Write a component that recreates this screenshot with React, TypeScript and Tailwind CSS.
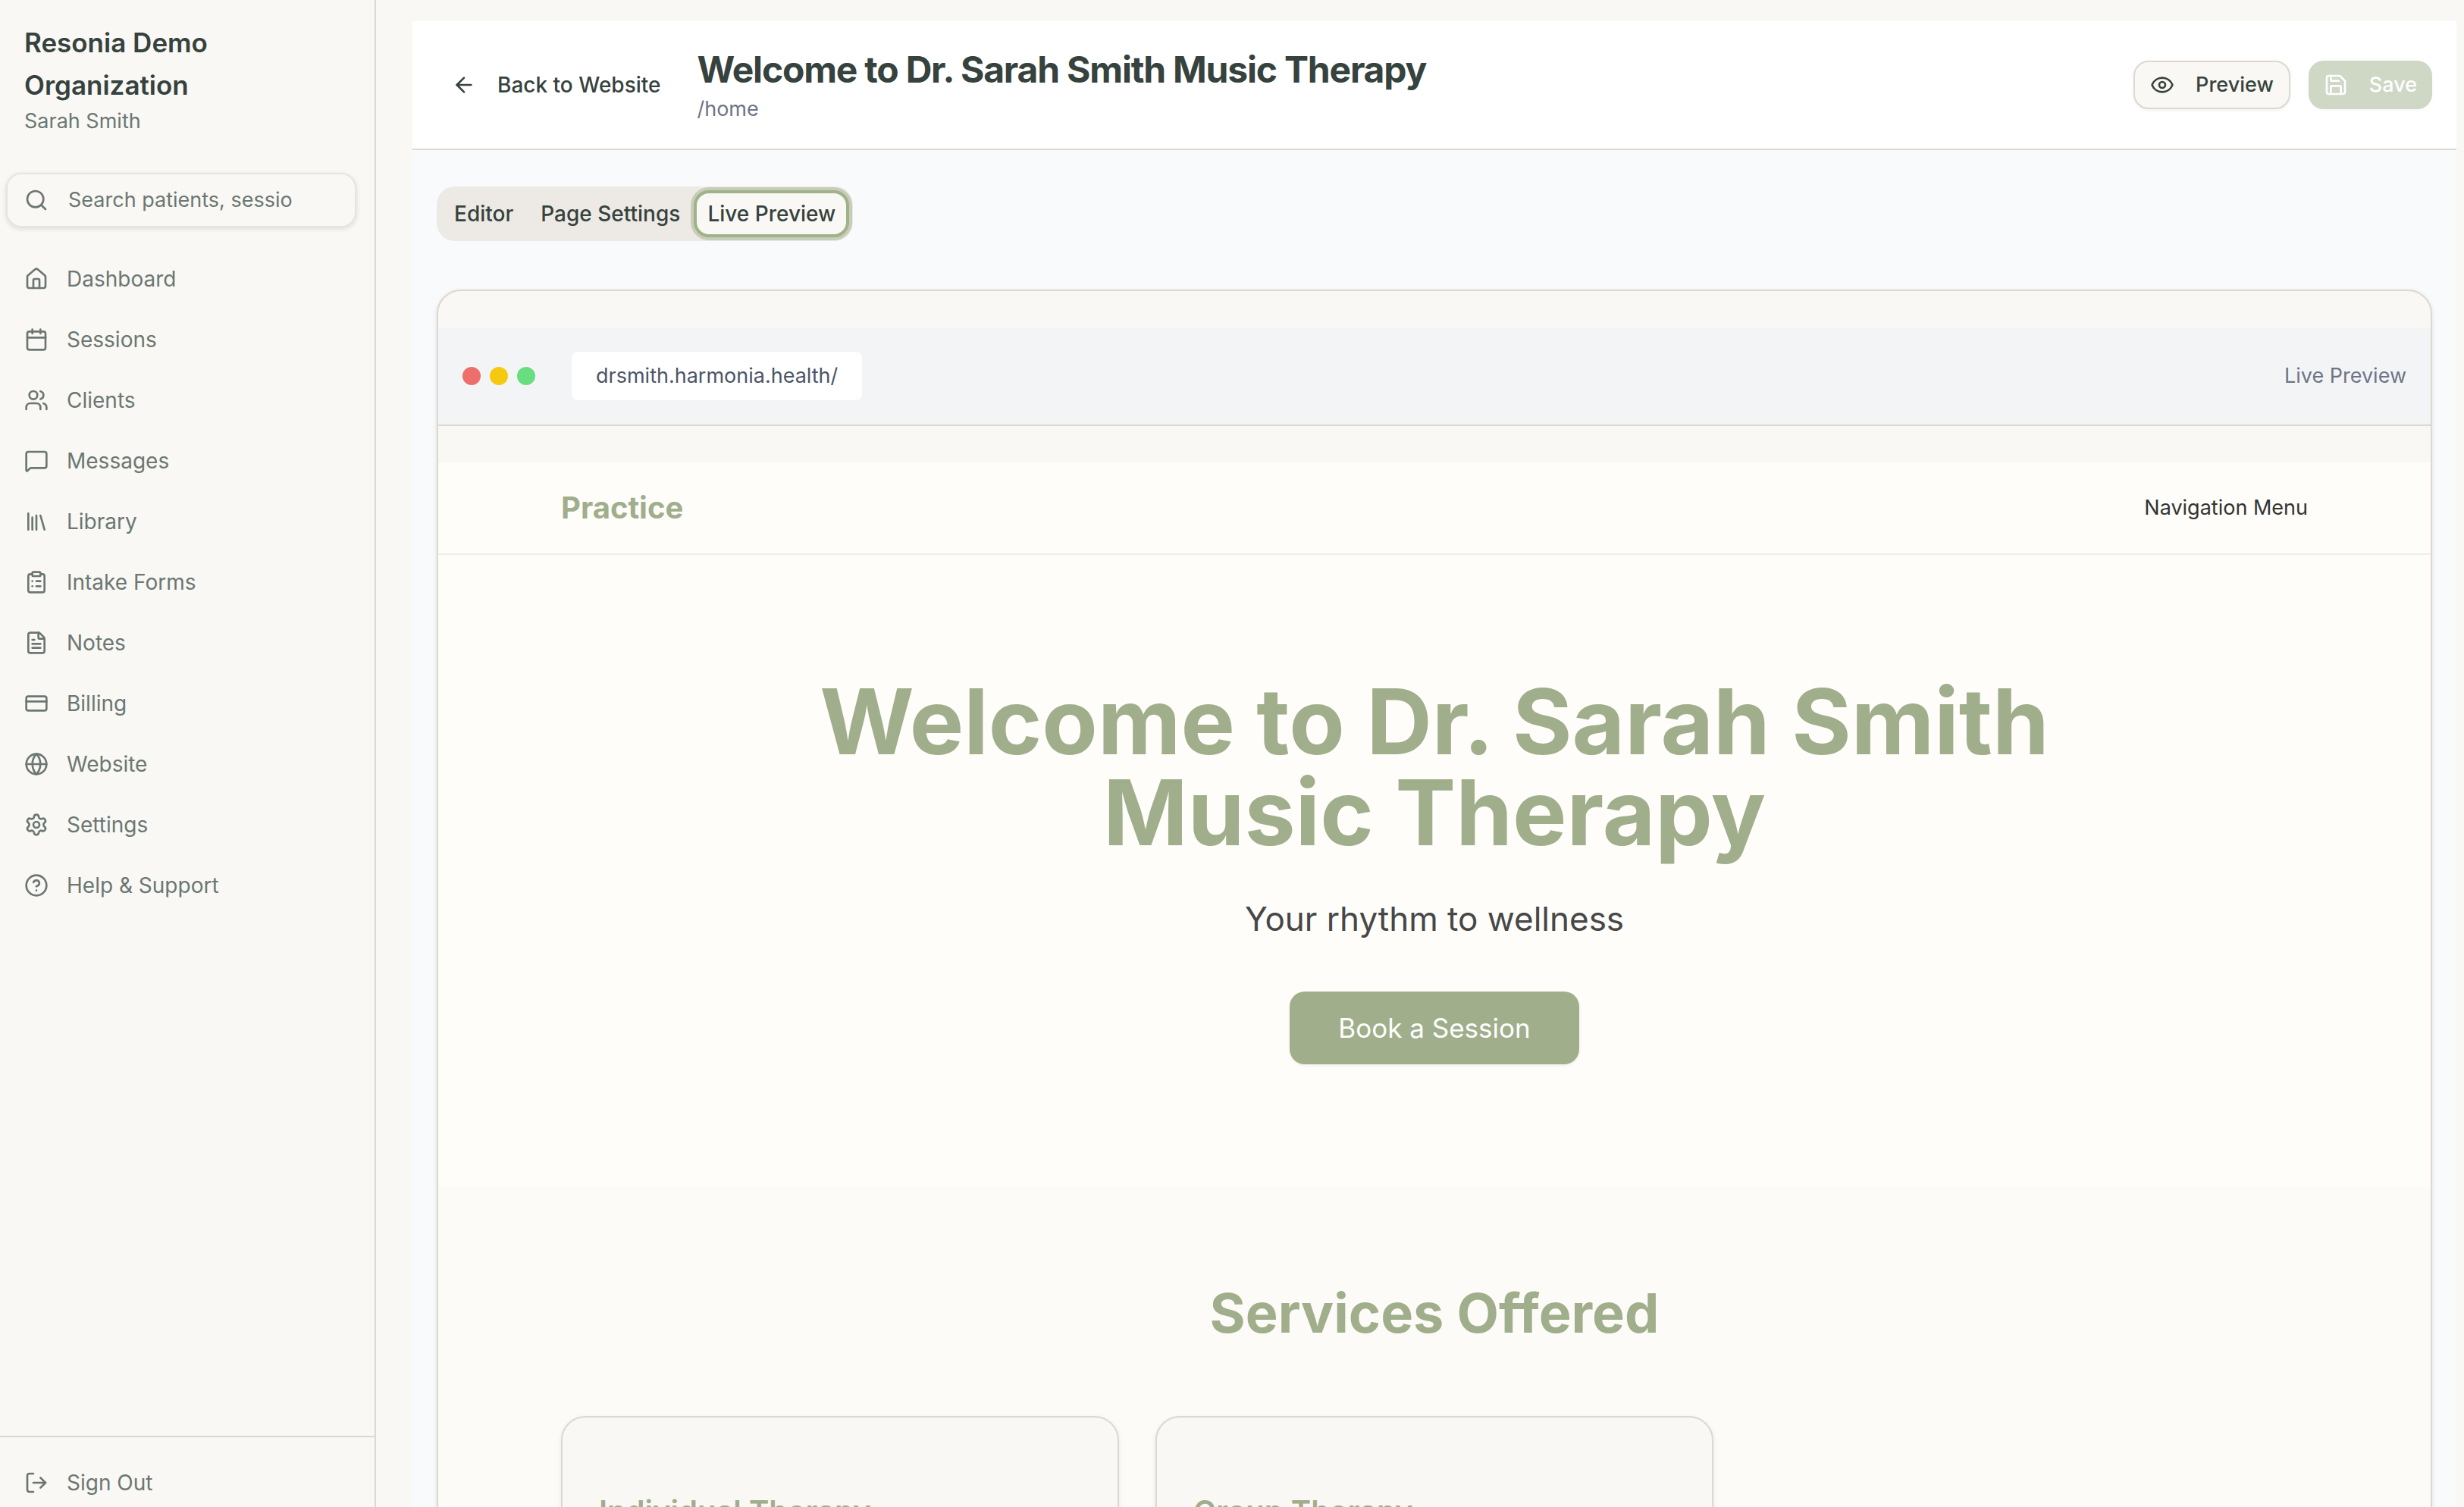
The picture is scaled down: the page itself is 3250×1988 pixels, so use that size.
import { useState } from 'react';
import type { ReactNode } from 'react';
import type { LucideIcon } from 'lucide-react';
import {
  ArrowLeft,
  Calendar,
  CircleHelp,
  ClipboardList,
  CreditCard,
  Eye,
  FileText,
  Globe,
  House,
  Library,
  LogOut,
  MessageSquare,
  Save,
  Search,
  Settings,
  Users,
} from 'lucide-react';

const navItems: { label: string; icon: LucideIcon }[] = [
  { label: 'Dashboard', icon: House },
  { label: 'Sessions', icon: Calendar },
  { label: 'Clients', icon: Users },
  { label: 'Messages', icon: MessageSquare },
  { label: 'Library', icon: Library },
  { label: 'Intake Forms', icon: ClipboardList },
  { label: 'Notes', icon: FileText },
  { label: 'Billing', icon: CreditCard },
  { label: 'Website', icon: Globe },
  { label: 'Settings', icon: Settings },
  { label: 'Help & Support', icon: CircleHelp },
];

const tabs = ['Editor', 'Page Settings', 'Live Preview'];

const services = ['Individual Therapy', 'Group Therapy'];

function Sidebar() {
  return (
    <aside className="flex w-[496px] shrink-0 flex-col border-r-2 border-[#ddd8d0] text-[#6b7773]">
      <div className="px-8 pt-7">
        <h2 className="text-[35px] leading-14 font-semibold text-[#36423d]">Resonia Demo Organization</h2>
        <p className="text-[27px] leading-10">Sarah Smith</p>
      </div>

      <div className="mt-12 pr-6 pl-2">
        <label className="flex h-18 items-center gap-[26px] rounded-[20px] border-2 border-[#e6e4de] pr-[82px] pl-[22px] shadow-[0_2px_6px_rgba(0,0,0,0.12)]">
          <Search className="size-8 shrink-0" />
          <input
            type="text"
            aria-label="Search"
            placeholder="Search patients, sessions..."
            className="w-full min-w-0 bg-transparent text-[27px] leading-10 outline-none placeholder:text-[#6b7773]"
          />
        </label>
      </div>

      <nav className="mt-9 flex flex-1 flex-col gap-4">
        {navItems.map(({ label, icon: Icon }) => (
          <a key={label} href="#" className="flex h-16 items-center gap-6 px-8 text-[28px] leading-10">
            <Icon className="size-8 shrink-0" />
            {label}
          </a>
        ))}
      </nav>

      <div className="border-t-2 border-[#ddd8d0] pt-7">
        <button type="button" className="flex h-16 items-center gap-6 px-8 text-[28px] leading-10">
          <LogOut className="size-8 shrink-0" />
          Sign Out
        </button>
      </div>
    </aside>
  );
}

function PageHeader() {
  return (
    <header className="flex items-center justify-between border-b-2 border-[#ddd8d0] bg-white p-8">
      <div className="flex items-center gap-7">
        <button type="button" className="flex h-16 items-center gap-7 px-5 text-[28px] font-medium">
          <ArrowLeft className="size-8" />
          Back to Website
        </button>
        <div>
          <h1 className="text-[48px] leading-16 font-bold tracking-tight">Welcome to Dr. Sarah Smith Music Therapy</h1>
          <p className="text-[27px] leading-10 text-[#6e7486]">/home</p>
        </div>
      </div>
      <div className="flex items-center gap-6 text-[27px] font-medium">
        <button
          type="button"
          className="flex h-16 items-center gap-7 rounded-[20px] border-2 border-[#ddd8d0] bg-[#f9f8f4] px-5 shadow-[0_2px_4px_rgba(0,0,0,0.05)]"
        >
          <Eye className="size-8" />
          Preview
        </button>
        <button
          type="button"
          disabled
          className="flex h-16 items-center gap-7 rounded-[20px] bg-[#cfd7c5] px-5 text-white shadow-[0_2px_4px_rgba(0,0,0,0.03)]"
        >
          <Save className="size-8" />
          Save
        </button>
      </div>
    </header>
  );
}

function BrowserBar() {
  return (
    <div className="flex items-center justify-between border-b-2 border-[#ddd8d0] bg-[#f3f4f6] p-8 text-[27px] leading-10">
      <div className="flex items-center gap-12">
        <div className="flex gap-3">
          <span className="size-6 rounded-full bg-[#ee6e6c]" />
          <span className="size-6 rounded-full bg-[#f6c911]" />
          <span className="size-6 rounded-full bg-[#68de80]" />
        </div>
        <div className="rounded-lg bg-white px-8 py-3 text-[#4b5565]">drsmith.harmonia.health/</div>
      </div>
      <span className="text-[#6e7486]">Live Preview</span>
    </div>
  );
}

function Container({ children, className = '' }: { children: ReactNode; className?: string }) {
  return <div className={`mx-auto max-w-[2304px] ${className}`}>{children}</div>;
}

function SitePreview() {
  return (
    <div className="mt-12 bg-[#fefdf9] text-[#333333]">
      <div className="border-b-2 border-[#efeee7] py-8">
        <Container className="flex items-center justify-between">
          <span className="text-[40px] leading-14 font-bold text-[#a0ae8c]">Practice</span>
          <span className="text-[27px] leading-10">Navigation Menu</span>
        </Container>
      </div>

      <section className="py-40 text-center">
        <h2 className="mx-auto max-w-[1792px] text-[120px] leading-none font-bold text-[#a0ae8c]">
          Welcome to Dr. Sarah Smith Music Therapy
        </h2>
        <p className="mt-12 text-[44px] leading-16 text-[#474747]">Your rhythm to wellness</p>
        <button
          type="button"
          className="mt-16 h-24 rounded-[20px] bg-[#a0ae8c] px-16 text-[35px] text-white shadow-[0_2px_4px_rgba(0,0,0,0.05)]"
        >
          Book a Session
        </button>
      </section>

      <section className="bg-[#fcfbf7] py-32">
        <h2 className="text-center text-[72px] leading-20 font-bold text-[#a0ae8c]">Services Offered</h2>
        <Container className="mt-24 grid grid-cols-3 gap-12">
          {services.map((name) => (
            <article
              key={name}
              className="rounded-[32px] border-2 border-[#ddd8d0] bg-[#f9f8f4] px-12 py-24 shadow-[0_2px_6px_rgba(0,0,0,0.08)]"
            >
              <h3 className="text-[40px] leading-14 font-semibold text-[#a0ae8c]">{name}</h3>
            </article>
          ))}
        </Container>
      </section>
    </div>
  );
}

export default function App() {
  const [activeTab, setActiveTab] = useState('Live Preview');

  return (
    <div className="flex h-screen overflow-hidden bg-[#f9f8f4] font-['Inter',sans-serif] text-[#36423d]">
      <Sidebar />
      <main className="min-w-0 flex-1 overflow-hidden pt-7 pr-2.5 pl-12">
        <div className="bg-[#f9fafc]">
          <PageHeader />
          <div className="px-8 pt-12">
            <div role="tablist" className="inline-flex h-18 items-center rounded-[24px] bg-[#edeae5] p-[5px] text-[28px] font-medium">
              {tabs.map((tab) => (
                <button
                  key={tab}
                  type="button"
                  role="tab"
                  aria-selected={tab === activeTab}
                  onClick={() => setActiveTab(tab)}
                  className={`h-full rounded-[20px] border-4 px-3.5 ${
                    tab === activeTab
                      ? 'border-[#a0b288] bg-[#f9f8f4] ring-4 ring-[#c7cdb9]'
                      : 'border-transparent'
                  }`}
                >
                  {tab}
                </button>
              ))}
            </div>

            <div className="mt-16 overflow-hidden rounded-[32px] border-2 border-[#ddd8d0] bg-[#f9f8f4] pt-12 shadow-[0_2px_6px_rgba(0,0,0,0.1)]">
              <BrowserBar />
              <SitePreview />
            </div>
          </div>
        </div>
      </main>
    </div>
  );
}
